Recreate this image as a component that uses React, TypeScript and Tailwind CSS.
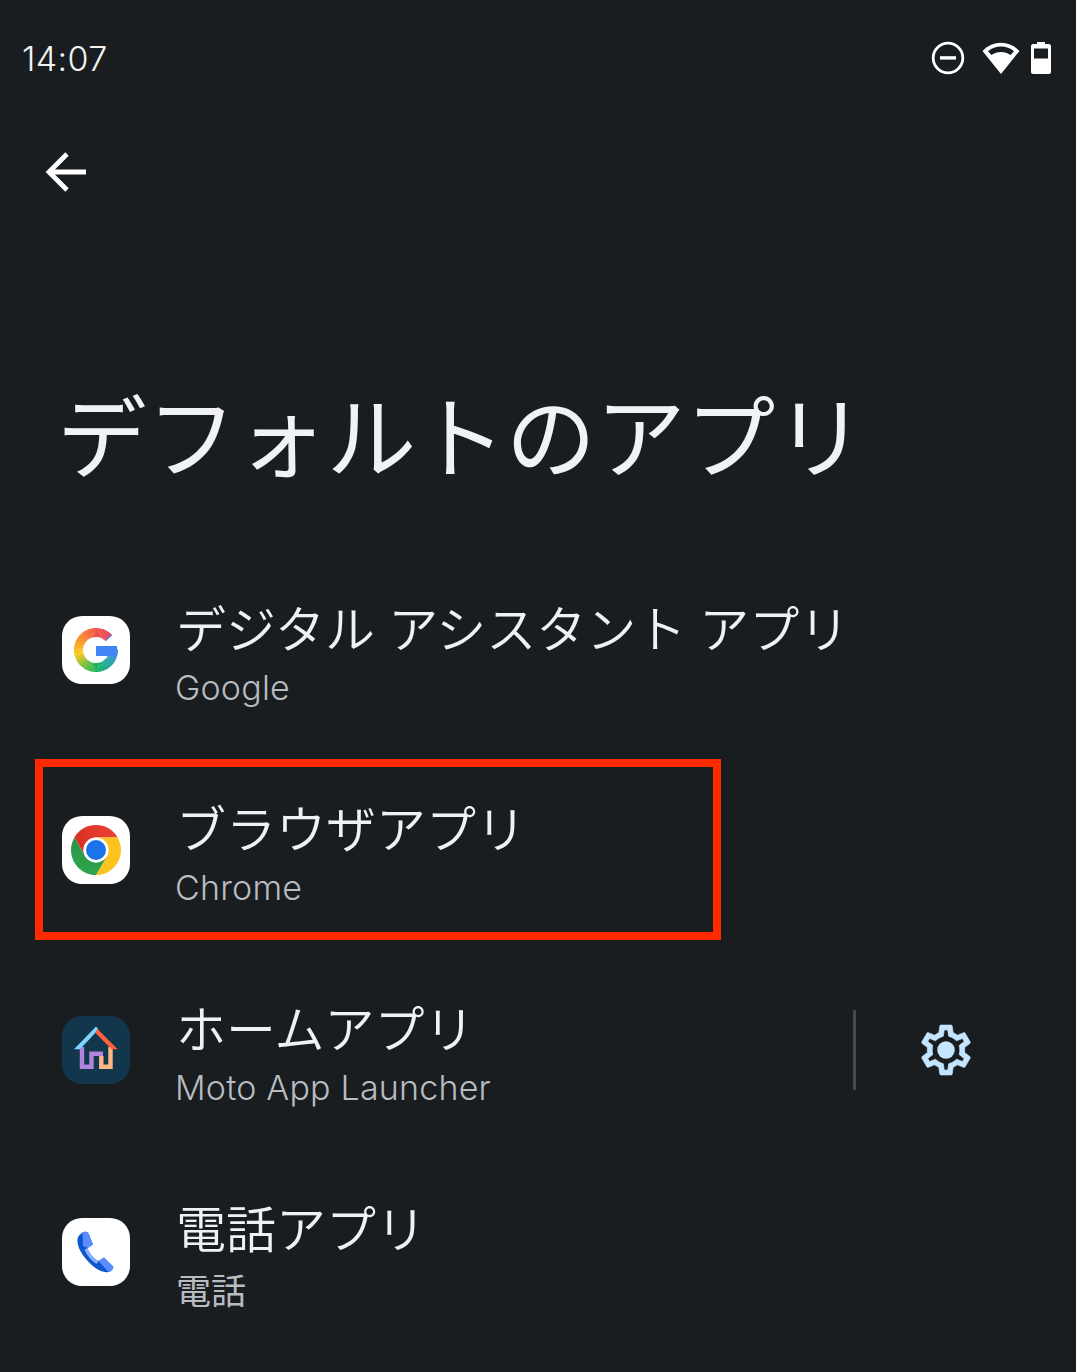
import React from "react";

const cjk = { fontFamily: '"Noto Sans CJK JP", "Noto Sans", sans-serif' };

function polar(r: number, deg: number) {
  const a = (deg * Math.PI) / 180;
  return [34 + r * Math.cos(a), 34 + r * Math.sin(a)];
}

function mix(a: number[], b: number[], t: number) {
  return `rgb(${a.map((v, i) => Math.round(v + (b[i] - v) * t)).join(",")})`;
}

const stops: [number, number[]][] = [
  [-45, [234, 67, 80]],
  [-90, [240, 80, 70]],
  [-150, [250, 150, 30]],
  [-190, [252, 200, 20]],
  [-230, [120, 190, 60]],
  [-270, [20, 180, 90]],
  [-320, [30, 160, 170]],
  [-350, [66, 133, 244]],
];

function colorAt(deg: number) {
  for (let i = 0; i < stops.length - 1; i++) {
    const [d0, c0] = stops[i];
    const [d1, c1] = stops[i + 1];
    if (deg <= d0 && deg >= d1) return mix(c0, c1, (deg - d0) / (d1 - d0));
  }
  return "rgb(66,133,244)";
}

function GoogleIcon() {
  const segs = [];
  for (let d = -42; d > -360; d -= 4) {
    const [x0, y0] = polar(17.5, d);
    const [x1, y1] = polar(17.5, d - 4.6);
    segs.push(
      <path
        key={d}
        d={`M${x0} ${y0}A17.5 17.5 0 0 0 ${x1} ${y1}`}
        fill="none"
        stroke={colorAt(d)}
        strokeWidth="9"
      />
    );
  }
  return (
    <svg viewBox="0 0 68 68" className="w-full h-full">
      {segs}
      <path d="M34 30H55V34C55 36 54.7 38 54 40H34Z" fill="#4285f4" />
    </svg>
  );
}

function ChromeIcon() {
  const slice = "M34 21.5H55.65A25 25 0 0 0 12.35 21.5L23.18 40.25A12.5 12.5 0 0 1 34 21.5Z";
  return (
    <svg viewBox="0 0 68 68" className="w-full h-full">
      <defs>
        <linearGradient id="cr" x1="0" y1="0" x2="1" y2="0">
          <stop offset="0" stopColor="#d93025" />
          <stop offset="1" stopColor="#ea4335" />
        </linearGradient>
        <linearGradient id="cg" x1="0" y1="0" x2="1" y2="1">
          <stop offset="0" stopColor="#34a853" />
          <stop offset="1" stopColor="#1e8e3e" />
        </linearGradient>
      </defs>
      <path d={slice} fill="url(#cr)" />
      <path d={slice} fill="#fcc31e" transform="rotate(120 34 34)" />
      <path d={slice} fill="url(#cg)" transform="rotate(240 34 34)" />
      <circle cx="34" cy="34" r="12.5" fill="#fff" />
      <circle cx="34" cy="34" r="10" fill="#1a73e8" />
    </svg>
  );
}

function HomeIcon() {
  return (
    <svg viewBox="0 0 68 68" className="w-full h-full">
      <path d="M20 31V50.8H29.5V37.8H41" fill="none" stroke="#b084dc" strokeWidth="4.4" />
      <path d="M39.3 40V50.8H48.5V31" fill="none" stroke="#ffb784" strokeWidth="4.4" />
      <polygon points="34,10.5 36.5,13.5 18,33.3 12,33.3" fill="#7fd4ff" />
      <polygon points="35,12.5 55.7,33.3 49.5,33.3 33.5,17" fill="#ff5f3c" />
    </svg>
  );
}

function PhoneIcon() {
  return (
    <svg viewBox="0 0 68 68" className="w-full h-full">
      <path
        d="M20.5 14.5L17.5 17C13.5 21 15.5 30 22 38.5C28.5 47 38 55.5 46.5 54C49 53.5 51 51.5 51.5 49L42 39.5L36.5 43C31.5 40.5 27 35 25.5 30L31 26.5L26.5 15.5C25.5 13.5 22.5 13 20.5 14.5Z"
        fill="#0b57d0"
      />
      <path
        d="M20.5 14.5C22.5 13 25.5 13.5 26.5 15.5L31 26.5L25.5 30L21 28Z"
        fill="#5b8cff"
      />
      <path
        d="M25.5 30C27 35 31.5 40.5 36.5 43L34.5 46C29 42.5 24.5 37 22.5 31.5Z"
        fill="#8ab0ff"
      />
      <path d="M42 39.5L51.5 49C51 51.5 49 53.5 46.5 54L36.5 43Z" fill="#5b8cff" />
    </svg>
  );
}

function Row({
  title,
  sub,
  subCjk,
  icon,
  bg,
  extra,
  iconClass,
}: {
  title: string;
  sub: string;
  subCjk?: boolean;
  icon: React.ReactNode;
  bg: string;
  extra?: React.ReactNode;
  iconClass?: string;
}) {
  return (
    <div className="flex items-center h-[200px] pl-[62px]">
      <div className={`w-[68px] h-[68px] rounded-[20px] shrink-0 ${bg} ${iconClass ?? ""}`}>{icon}</div>
      <div className="ml-[46px] pt-[8px] flex-1 flex flex-col">
        <div className="text-[50px] leading-[60px] font-[350] [word-spacing:2px] text-[#eff1f2] whitespace-pre" style={cjk}>
          {title}
        </div>
        {subCjk ? (
          <div className="text-[35px] leading-[48px] mt-[9px] text-[#b8bcc1] whitespace-pre" style={cjk}>
            {sub}
          </div>
        ) : (
          <div
            className="text-[34px] leading-[48px] mt-[8px] -ml-[1px] font-[350] tracking-[0.2px] text-[#b8bcc1] whitespace-pre"
            style={{ fontFamily: "Inter, sans-serif" }}
          >
            {sub}
          </div>
        )}
      </div>
      {extra}
    </div>
  );
}

export default function App() {
  return (
    <div className="relative w-[1076px] h-[1372px] overflow-hidden bg-[#191d20]">
      <div className="flex items-center justify-between h-[116px] pl-[22px] pr-[25px]">
        <span className="text-[34px] mt-[1px] font-[350] tracking-[0.4px] text-[#f2f2f2]" style={{ fontFamily: "Inter, sans-serif" }}>
          14:07
        </span>
        <div className="flex items-center">
          <svg viewBox="0 0 34 34" className="w-[34px] h-[34px]">
            <circle cx="17" cy="17" r="14.8" fill="none" stroke="#fff" strokeWidth="2.8" />
            <rect x="9" y="15.2" width="16" height="3.4" fill="#fff" />
          </svg>
          <svg viewBox="0 0 38 34" className="ml-[17px] w-[38px] h-[34px]">
            <path d="M19 33L0.5 10C6 4.5 12 1.8 19 1.8S32 4.5 37.5 10Z" fill="#fff" />
            <path d="M6 10.2C10 7 14 5.5 19 5.5S28 7 32 10.2L28.6 14C25.5 12 22.5 11 19 11S12.5 12 9.4 14Z" fill="#191d20" />
          </svg>
          <svg viewBox="0 0 20 32" className="ml-[11px] w-[20px] h-[32px]">
            <path
              fillRule="evenodd"
              d="M6 0H14V2H18C19 2 20 3 20 4V30C20 31 19 32 18 32H2C1 32 0 31 0 30V4C0 3 1 2 2 2H6ZM3 6.5V16.5H17V6.5Z"
              fill="#fff"
            />
          </svg>
        </div>
      </div>

      <div className="h-[110px] pl-[44px] pt-[35px]">
        <svg viewBox="0 0 42 42" className="w-[42px] h-[42px]" fill="none" stroke="#fff" strokeWidth="4.8">
          <path d="M42 21H5" />
          <path d="M23 3L5 21L23 39" />
        </svg>
      </div>

      <div className="h-[324px] pl-[57px] pt-[146px]">
        <div className="text-[89.8px] leading-[120px] font-normal text-[#f1f2f3] whitespace-pre" style={cjk}>
          デフォルトのアプリ
        </div>
      </div>

      <Row title="デジタル アシスタント アプリ" sub="Google" bg="bg-white" icon={<GoogleIcon />} />
      <Row title="ブラウザアプリ" sub="Chrome" bg="bg-white" icon={<ChromeIcon />} />
      <Row
        title="ホームアプリ"
        sub="Moto App Launcher"
        bg="bg-[#12364b]"
        icon={<HomeIcon />}
        extra={
          <div className="flex items-center h-[80px] mr-[100px]">
            <div className="w-[3px] h-[80px] bg-[#47494b]" />
            <svg viewBox="0 0 24 24" className="ml-[60px] w-[60px] h-[60px]" fill="#c5e5ff" stroke="#c5e5ff" strokeWidth="0.25" strokeLinejoin="round">
              <path d="M19.43 12.98c.04-.32.07-.64.07-.98 0-.34-.03-.66-.07-.98l2.11-1.65c.19-.15.24-.42.12-.64l-2-3.46c-.09-.16-.26-.25-.44-.25-.06 0-.12.01-.17.03l-2.49 1c-.52-.4-1.08-.73-1.69-.98l-.38-2.65C14.46 2.18 14.25 2 14 2h-4c-.25 0-.46.18-.49.42l-.38 2.65c-.61.25-1.17.59-1.69.98l-2.49-1c-.06-.02-.12-.03-.18-.03-.17 0-.34.09-.43.25l-2 3.46c-.13.22-.07.49.12.64l2.11 1.65c-.04.32-.07.65-.07.98 0 .33.03.66.07.98l-2.11 1.65c-.19.15-.24.42-.12.64l2 3.46c.09.16.26.25.44.25.06 0 .12-.01.17-.03l2.49-1c.52.4 1.08.73 1.69.98l.38 2.65c.03.24.24.42.49.42h4c.25 0 .46-.18.49-.42l.38-2.65c.61-.25 1.17-.59 1.69-.98l2.49 1c.06.02.12.03.18.03.17 0 .34-.09.43-.25l2-3.46c.12-.22.07-.49-.12-.64l-2.11-1.65zm-1.98-1.71c.04.31.05.52.05.73 0 .21-.02.43-.05.73l-.14 1.13.89.7 1.08.84-.7 1.21-1.27-.51-1.04-.42-.9.68c-.43.32-.84.56-1.25.73l-1.06.43-.16 1.13-.2 1.35h-1.4l-.19-1.35-.16-1.13-1.06-.43c-.43-.18-.83-.41-1.23-.71l-.91-.7-1.06.43-1.27.51-.7-1.21 1.08-.84.89-.7-.14-1.13c-.03-.31-.05-.54-.05-.74s.02-.43.05-.73l.14-1.13-.89-.7-1.08-.84.7-1.21 1.27.51 1.04.42.9-.68c.43-.32.84-.56 1.25-.73l1.06-.43.16-1.13.2-1.35h1.39l.19 1.35.16 1.13 1.06.43c.43.18.83.41 1.23.71l.91.7 1.06-.43 1.27-.51.7 1.21-1.07.85-.89.7.14 1.13z" />
              <circle cx="12" cy="12" r="3.5" stroke="none" />
            </svg>
          </div>
        }
      />
      <Row title="電話アプリ" sub="電話" subCjk bg="bg-white" icon={<PhoneIcon />} iconClass="mt-[4px]" />

      <div className="absolute left-[35px] top-[759px] w-[686px] h-[181px] border-[8px] border-[#ff2a00]" />
    </div>
  );
}
